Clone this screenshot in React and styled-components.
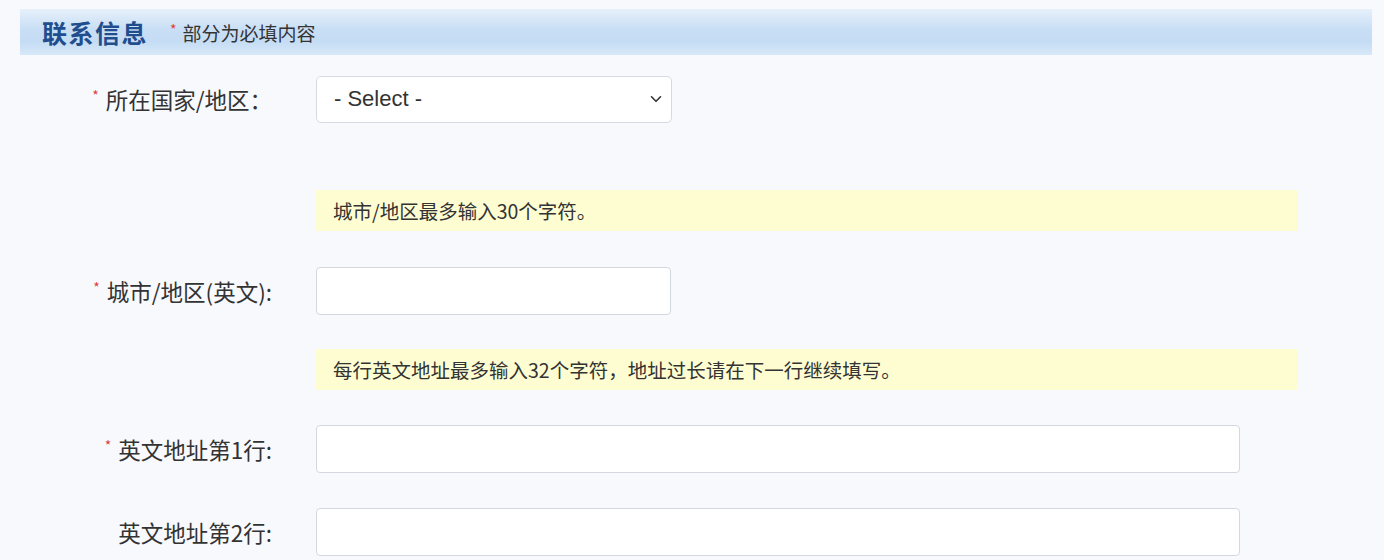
import React from "react";
import styled, { createGlobalStyle } from "styled-components";

const Global = createGlobalStyle`
  html, body { margin: 0; padding: 0; }
  body {
    background: #f8f9fd;
    font-family: "Noto Sans CJK SC", "Liberation Sans", sans-serif;
    color: #333;
  }
`;

const Page = styled.div`
  width: 1384px;
  height: 560px;
  box-sizing: border-box;
  padding-top: 9px;
  overflow: hidden;
  background: #f8f9fd;
`;

const Header = styled.div`
  margin-left: 20px;
  width: 1352px;
  height: 46px;
  box-sizing: border-box;
  display: flex;
  align-items: center;
  padding-left: 22px;
  background: linear-gradient(to bottom, #e6f0fb 0%, #c8def5 45%, #c4dcf4 70%, #d8e8f8 100%);
`;

const Title = styled.h2`
  margin: 0;
  font-size: 25px;
  font-weight: 700;
  color: #1f4d8d;
  letter-spacing: 1.5px;
  font-family: "Noto Sans CJK SC", sans-serif;
`;

const Note = styled.span`
  margin-left: 22px;
  font-size: 19px;
  color: #333;
  display: flex;
  align-items: center;
  font-family: "Noto Sans CJK SC", sans-serif;
`;

const Star = styled.span`
  color: #e03c3c;
  font-size: 14px;
  line-height: 1;
  margin-right: 6px;
  position: relative;
  top: -3px;
`;

const Form = styled.div`
  display: grid;
  grid-template-columns: 272px 1fr;
  column-gap: 44px;
  margin-top: 20px;
`;

const Label = styled.label`
  grid-column: 1;
  display: flex;
  justify-content: flex-end;
  align-items: center;
  font-size: 22.5px;
  color: #333;
  font-family: "Noto Sans CJK SC", sans-serif;
  margin-top: ${(p) => p.$mt || 0}px;
  height: 48px;
`;

const LabelStar = styled.span`
  color: #e03c3c;
  font-size: 14px;
  align-self: flex-start;
  margin-top: 10px;
  margin-right: 7px;
`;

const Control = styled.div`
  grid-column: 2;
  margin-top: ${(p) => p.$mt || 0}px;
  height: 48px;
  display: flex;
  align-items: center;
`;

const SelectBox = styled.div`
  width: 356px;
  height: 47px;
  box-sizing: border-box;
  border: 1px solid #d5dae2;
  border-radius: 5px;
  background: #fff;
  display: flex;
  align-items: center;
  justify-content: space-between;
  padding: 0 8px 0 17px;
  font-family: "Liberation Sans", Arial, sans-serif;
  font-size: 22px;
  color: #333;
`;

const Input = styled.input`
  width: ${(p) => p.$w}px;
  height: 48px;
  box-sizing: border-box;
  border: 1px solid #d3d8e0;
  border-radius: 4px;
  background: #fff;
  outline: none;
  padding: 0 12px;
  font-size: 18px;
`;

const Hint = styled.div`
  grid-column: 2;
  width: 982px;
  height: 41px;
  box-sizing: border-box;
  margin-top: ${(p) => p.$mt || 0}px;
  background: #fefdd2;
  display: flex;
  align-items: center;
  padding-left: 17px;
  font-size: 19.5px;
  color: #333;
  font-family: "Noto Sans CJK SC", sans-serif;
`;

const Chevron = () => (
  <svg width="14" height="14" viewBox="0 0 14 14">
    <path d="M2.5 4.8 L7 9.3 L11.5 4.8" fill="none" stroke="#333" strokeWidth="1.6" strokeLinecap="round" strokeLinejoin="round" />
  </svg>
);

export default function App() {
  return (
    <>
      <Global />
      <Page>
        <Header>
          <Title>联系信息</Title>
          <Note>
            <Star>*</Star>部分为必填内容
          </Note>
        </Header>
        <Form>
          <Label><LabelStar>*</LabelStar>所在国家/地区：</Label>
          <Control>
            <SelectBox>
              <span>- Select -</span>
              <Chevron />
            </SelectBox>
          </Control>

          <Hint $mt={67}>城市/地区最多输入30个字符。</Hint>

          <Label $mt={36}><LabelStar>*</LabelStar>城市/地区(英文):</Label>
          <Control $mt={36}><Input $w={355} /></Control>

          <Hint $mt={34}>每行英文地址最多输入32个字符，地址过长请在下一行继续填写。</Hint>

          <Label $mt={35}><LabelStar>*</LabelStar>英文地址第1行:</Label>
          <Control $mt={35}><Input $w={924} /></Control>

          <Label $mt={35}>英文地址第2行:</Label>
          <Control $mt={35}><Input $w={924} /></Control>
        </Form>
      </Page>
    </>
  );
}
